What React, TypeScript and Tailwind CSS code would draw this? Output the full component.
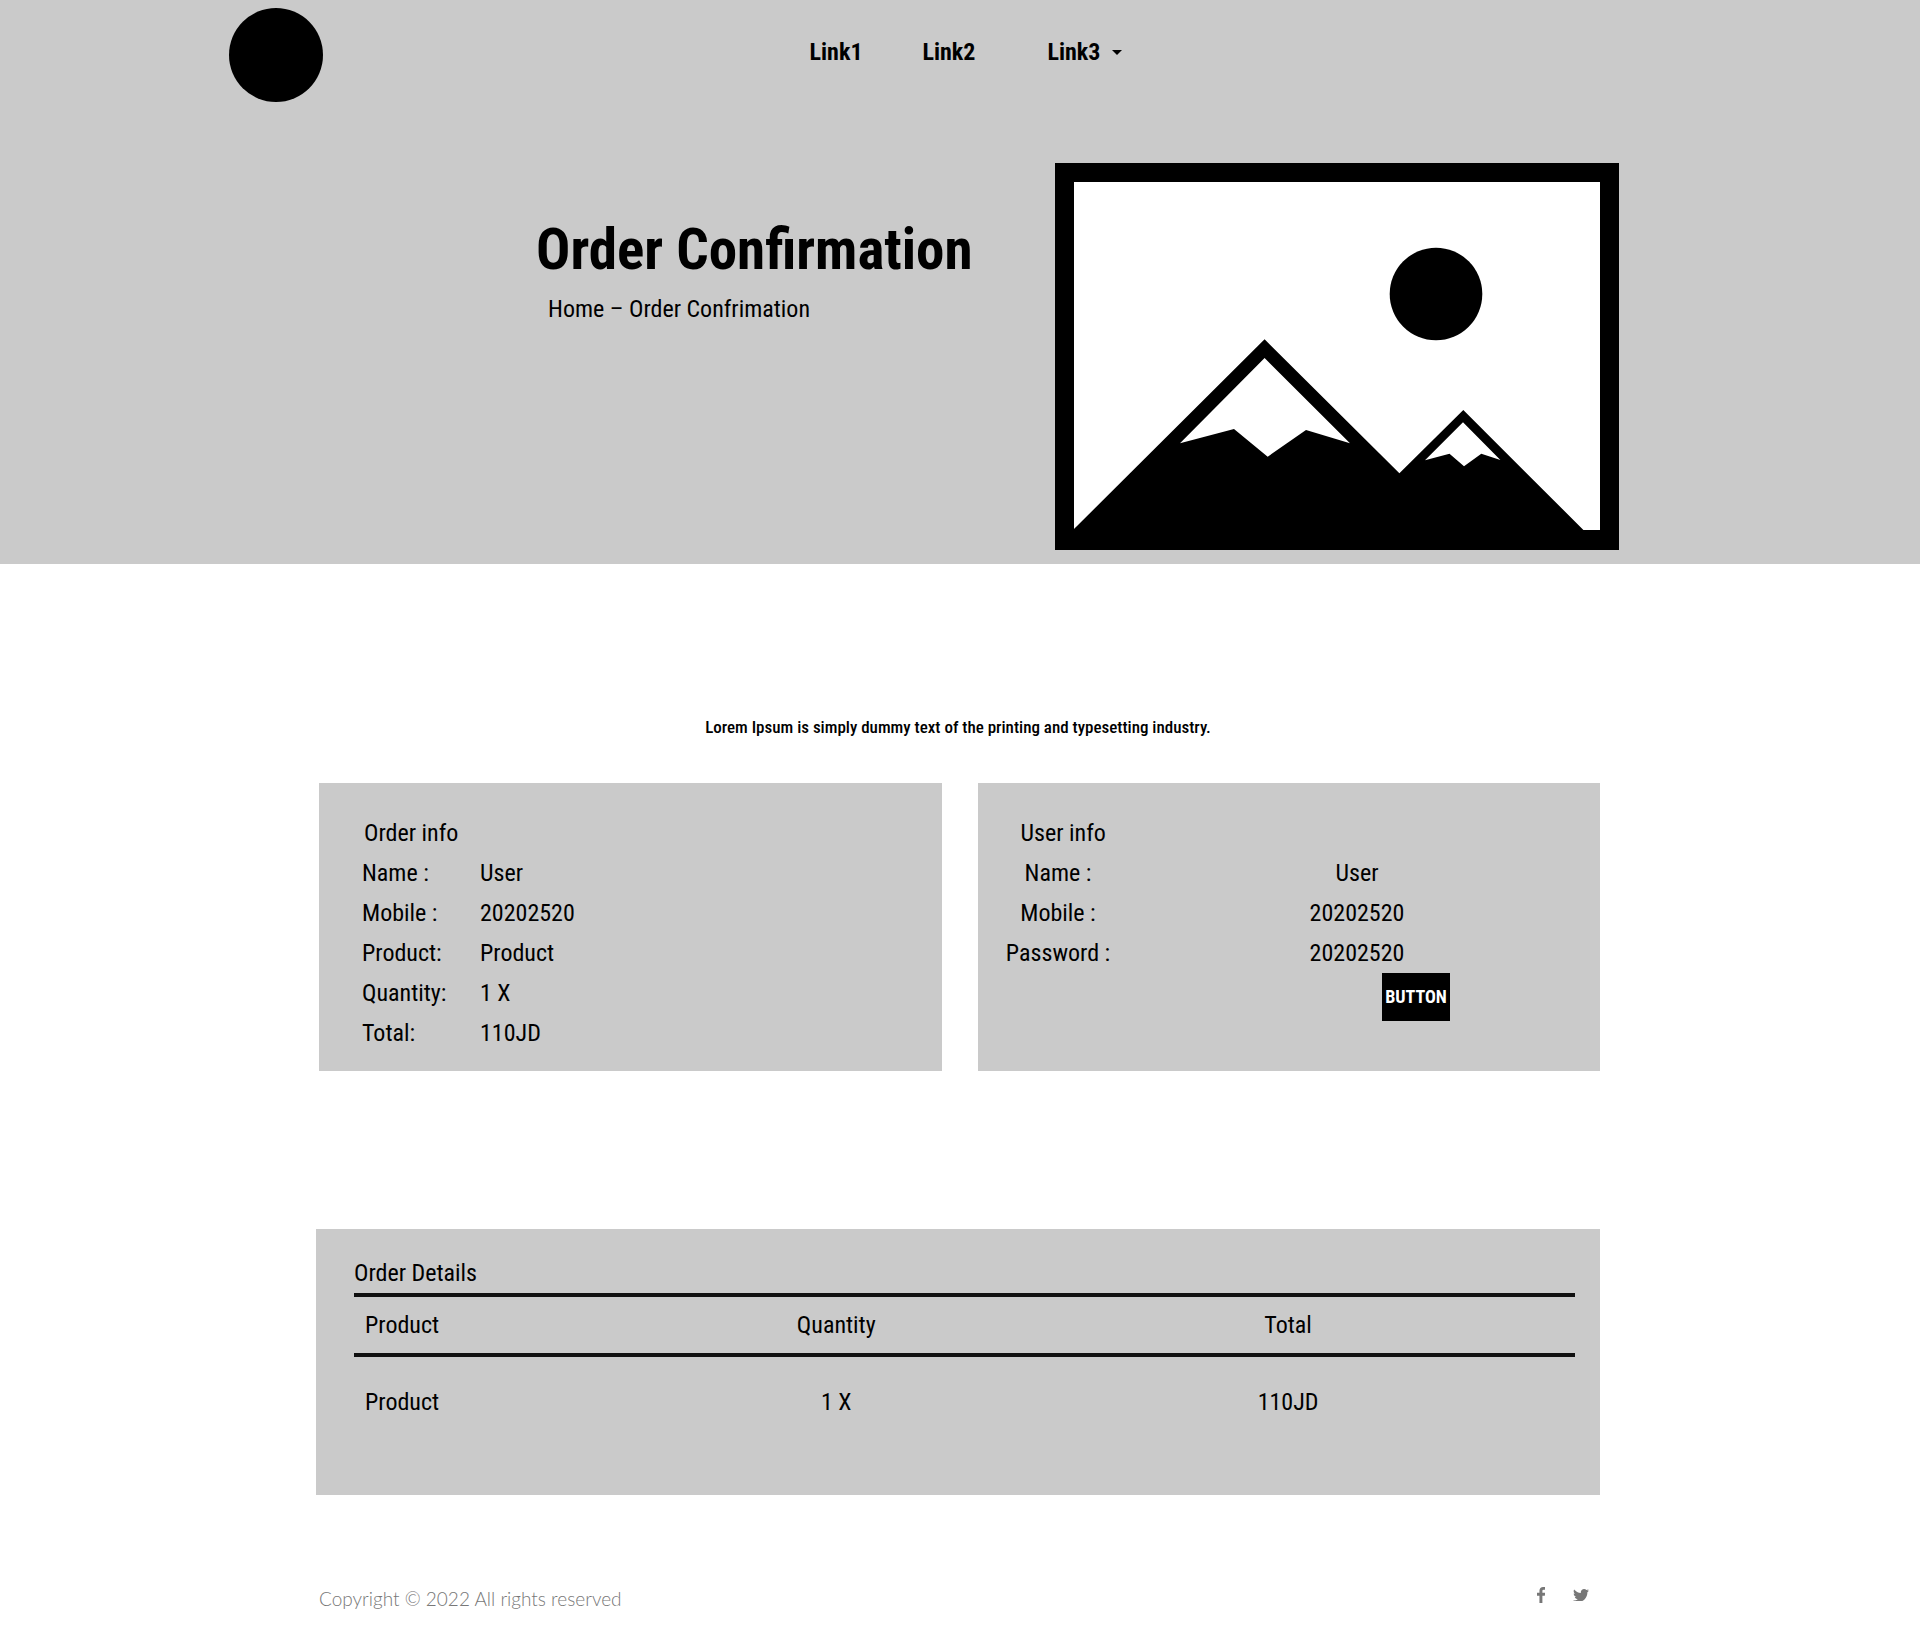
import React from "react";

const orderInfo = [
  ["Name :", "User"],
  ["Mobile :", "20202520"],
  ["Product:", "Product"],
  ["Quantity:", "1 X"],
  ["Total:", "110JD"],
];

const userInfo = [
  ["Name :", "User"],
  ["Mobile :", "20202520"],
  ["Password :", "20202520"],
];

function Landscape() {
  return (
    <svg viewBox="0 0 564 387" className="w-[564px] shrink-0" role="img" aria-label="Landscape">
      <rect width="564" height="387" fill="#000" />
      <rect x="19" y="19" width="526" height="348" fill="#fff" />
      <circle cx="381" cy="131" r="46.3" fill="#000" />
      <path d="M19 366 L209.6 176.3 L344.4 310.3 L408.3 247 L528.4 367 V370 H19 Z" fill="#000" />
      <path d="M209.6 195 L295 280.3 L251 267 L212.7 293.7 L179 266 L125 280.3 Z" fill="#fff" />
      <path d="M408 259.3 L445.4 297 L426.3 290.7 L409 303.3 L394.5 290.7 L370 297.3 Z" fill="#fff" />
    </svg>
  );
}

function FacebookIcon() {
  return (
    <svg viewBox="95 128 864 1664" className="h-4" fill="currentColor" aria-hidden="true">
      <path d="M959 140v264h-157q-86 0-116 36t-30 108v189h293l-39 296h-254v759h-306v-759h-255v-296h255v-218q0-186 104-288.5t277-102.5q147 0 228 12z" />
    </svg>
  );
}

function TwitterIcon() {
  return (
    <svg viewBox="108 256 1576 1280" className="w-4" fill="currentColor" aria-hidden="true">
      <path d="M1684 408q-67 98-162 167 1 14 1 42 0 130-38 259.5t-115.5 248.5-184.5 210.5-258 146-323 54.5q-271 0-496-145 35 4 78 4 225 0 401-138-105-2-188-64.5t-114-159.5q33 5 61 5 43 0 85-11-112-23-185.5-111.5t-73.5-205.5v-4q68 38 146 41-66-44-105-115t-39-154q0-88 44-163 121 149 294.5 238.5t371.5 99.5q-8-38-8-74 0-134 94.5-228.5t228.5-94.5q140 0 236 102 109-21 205-78-37 115-142 178 93-10 186-50z" />
    </svg>
  );
}

export default function App() {
  return (
    <div className="bg-white text-2xl leading-10 text-black [font-family:'Roboto_Condensed','Liberation_Sans',sans-serif]">
      <header className="bg-[#cacaca] pb-[14px]">
        <div className="mx-auto grid max-w-[1462px] grid-cols-[1fr_auto_1fr] items-start pt-2">
          <a href="#home" aria-label="Home" className="size-[94px] rounded-full bg-black" />
          <nav className="mt-6 flex items-center pl-3 font-bold">
            <a href="#link1" className="mr-15">Link1</a>
            <a href="#link2" className="mr-18">Link2</a>
            <button type="button" className="flex items-center gap-3 font-bold">
              Link3
              <svg viewBox="0 0 10 5" className="w-[10px]" aria-hidden="true">
                <path d="M0 0 H10 L5 5 Z" />
              </svg>
            </button>
          </nav>
        </div>
        <div className="mx-auto mt-[61px] flex max-w-[1462px] justify-between pr-[72px] pl-[307px]">
          <div className="mt-12">
            <h1 className="text-[57px] leading-[78px] font-bold whitespace-nowrap">Order Confirmation</h1>
            <p className="pl-3">
              <a href="#home">Home</a> – Order Confrimation
            </p>
          </div>
          <Landscape />
        </div>
      </header>

      <main className="mx-auto max-w-[1288px] pt-[143px] pr-1">
        <p className="text-center text-[17px] leading-10 font-medium">
          Lorem Ipsum is simply dummy text of the printing and typesetting industry.
        </p>

        <div className="mt-9 grid grid-cols-2 gap-9 pl-[3px]">
          <section className="bg-[#cacaca] pt-[30px] pb-[18px]">
            <h2 className="pl-[45px]">Order info</h2>
            <dl className="pl-[43px]">
              {orderInfo.map(([k, v]) => (
                <div key={k} className="flex">
                  <dt className="w-[118px]">{k}</dt>
                  <dd>{v}</dd>
                </div>
              ))}
            </dl>
          </section>
          <section className="bg-[#cacaca] pt-[30px]">
            <h2 className="pl-[43px]">User info</h2>
            <dl>
              {userInfo.map(([k, v]) => (
                <div key={k} className="flex justify-between pr-[150px]">
                  <dt className="w-[161px] text-center">{k}</dt>
                  <dd className="w-[186px] text-center">{v}</dd>
                </div>
              ))}
            </dl>
            <div className="flex justify-end pr-[150px]">
              <button type="button" className="h-12 w-[68px] bg-black text-lg font-bold text-white">BUTTON</button>
            </div>
          </section>
        </div>

        <section className="mt-[158px] bg-[#cacaca] pt-6 pr-[25px] pb-12 pl-[38px]">
          <h2>Order Details</h2>
          <table className="w-full table-fixed border-collapse">
            <thead>
              <tr className="h-[60px] border-y-4 border-[#101010]">
                <th className="w-[26%] pl-[11px] text-left font-normal">Product</th>
                <th className="font-normal">Quantity</th>
                <th className="w-[47%] font-normal">Total</th>
              </tr>
            </thead>
            <tbody>
              <tr className="h-[92px] text-center">
                <td className="pl-[11px] text-left">Product</td>
                <td>1 X</td>
                <td>110JD</td>
              </tr>
            </tbody>
          </table>
        </section>
      </main>

      <footer className="mx-auto flex max-w-[1282px] items-start justify-between pt-[84px] pb-6 text-[19px] leading-10 text-[#777] [font-family:Lato,sans-serif]">
        <p className="font-light">Copyright © 2022 All rights reserved</p>
        <div className="flex items-center gap-7 pt-2 pr-3">
          <a href="#facebook" aria-label="Facebook"><FacebookIcon /></a>
          <a href="#twitter" aria-label="Twitter"><TwitterIcon /></a>
        </div>
      </footer>
    </div>
  );
}
